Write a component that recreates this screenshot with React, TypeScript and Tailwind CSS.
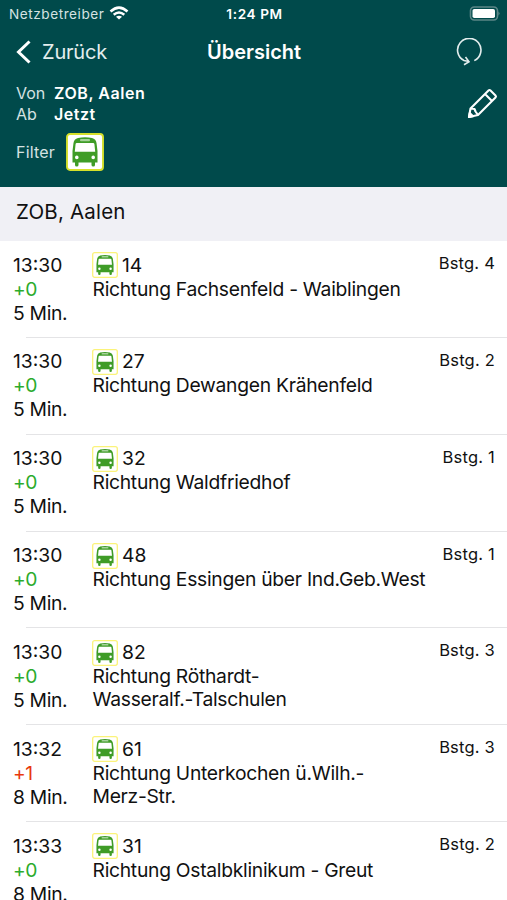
import React from "react";

type Departure = {
  time: string;
  delay: number;
  minutes: number;
  line: string;
  direction: string[];
  platform: number;
}

const departures: Departure[] = [
  { time: "13:30", delay: 0, minutes: 5, line: "14", direction: ["Richtung Fachsenfeld - Waiblingen"], platform: 4 },
  { time: "13:30", delay: 0, minutes: 5, line: "27", direction: ["Richtung Dewangen Krähenfeld"], platform: 2 },
  { time: "13:30", delay: 0, minutes: 5, line: "32", direction: ["Richtung Waldfriedhof"], platform: 1 },
  { time: "13:30", delay: 0, minutes: 5, line: "48", direction: ["Richtung Essingen über Ind.Geb.West"], platform: 1 },
  { time: "13:30", delay: 0, minutes: 5, line: "82", direction: ["Richtung Röthardt-", "Wasseralf.-Talschulen"], platform: 3 },
  { time: "13:32", delay: 1, minutes: 8, line: "61", direction: ["Richtung Unterkochen ü.Wilh.-", "Merz-Str."], platform: 3 },
  { time: "13:33", delay: 0, minutes: 8, line: "31", direction: ["Richtung Ostalbklinikum - Greut"], platform: 2 },
];

// bus pictogram with its yellow frame
const BusIcon = ({ className, frame }: { className: string; frame: string }) => (
  <svg viewBox="0 0 38 38" className={className}>
    <rect x="1" y="1" width="36" height="36" rx="3" fill="#fff" stroke={frame} strokeWidth="1.900" />
    <path
      fill="#3f9c27"
      fillRule="evenodd"
      d="M12 5Q19 3.500 26 5Q30 6 30.500 10L31.500 18V29.500H29V32Q29 33.500 27.300 33.500Q25.500 33.500 25.500 32V29.500H12.500V32Q12.500 33.500 10.700 33.500Q9 33.500 9 32V29.500H6.500V18L7.500 10Q8 6 12 5ZM10.800 10Q9.800 10 9.600 11L8.800 18.800H29.200L28.400 11Q28.200 10 27.200 10ZM10.800 22.600A1.800 1.800 0 1 0 10.800 26.200A1.800 1.800 0 1 0 10.800 22.600ZM27.200 22.600A1.800 1.800 0 1 0 27.200 26.200A1.800 1.800 0 1 0 27.200 22.600Z"
    />
    <rect x="14" y="6" width="10" height="2.200" rx="1" fill="#a5d199" />
  </svg>
);

const StatusBar = () => (
  <div className="flex h-7 items-center justify-between pl-[9px] pr-[7px]">
    <div className="flex flex-1 items-center gap-[5px]">
      <span className="text-[13.600px] tracking-[0.550px] text-[#d5e2e2]">Netzbetreiber</span>
      <svg viewBox="0 0 20 14" className="-mt-0.5 h-[14px] w-[20px]" fill="none" stroke="#fff" strokeWidth="2.500">
        <path d="M1.500 5.500Q10 -2.300 18.500 5.500" />
        <path d="M4.700 8.700Q10 4.200 15.300 8.700" />
        <path d="M7 10.700Q10 8.700 13 10.700L10 13.600Z" fill="#fff" stroke="none" />
      </svg>
    </div>
    <span className="text-[13.600px] font-semibold tracking-[0.600px]">1:24 PM</span>
    <div className="flex flex-1 items-center justify-end">
      <svg viewBox="0 0 31 15" className="-mt-px h-[15px] w-[31px]">
        <rect x="1.500" y="1" width="27" height="13" rx="3.800" fill="none" stroke="#5b8687" strokeWidth="1.600" />
        <rect x="3.500" y="3" width="22.500" height="9" rx="1.800" fill="#fff" />
        <path d="M29.500 5.500Q31.500 7.500 29.500 9.500Z" fill="#6b9191" />
      </svg>
    </div>
  </div>
);

const Header = () => (
  <header className="h-[186.500px] bg-[#004a4b] text-white">
    <StatusBar />
    <div className="flex h-12 items-center pl-4 pr-[25px]">
      <button className="flex w-[191px] items-center gap-[11px]">
        <svg viewBox="0 0 15 24" className="h-6 w-[15px]" fill="none" stroke="#fff" strokeWidth="3">
          <path d="M13.500 1.500L2.500 12L13.500 22.500" />
        </svg>
        <span className="text-[20px] tracking-[-0.200px] text-[#e4eeee]">Zurück</span>
      </button>
      <h1 className="text-[20px] font-semibold">Übersicht</h1>
      <div className="flex flex-1 justify-end">
        <svg viewBox="0 0 26 28" className="h-7 w-[26px]" fill="none" stroke="#e2eded" strokeWidth="1.600">
          <path d="M18.300 22.600A11.700 11.700 0 1 0 8 22.500L12.800 23.500M9.500 19L13 23.700L8 26.700" />
        </svg>
      </div>
    </div>
    <div className="flex items-center justify-between pl-4 pr-[9px] pt-[7px]">
      <div className="text-[16px] leading-[21px]">
        <div className="flex">
          <span className="w-[38px] text-[#d5e2e2]">Von</span>
          <span className="font-semibold tracking-[0.550px]">ZOB, Aalen</span>
        </div>
        <div className="flex">
          <span className="w-[38px] text-[#d5e2e2]">Ab</span>
          <span className="font-semibold tracking-[0.500px]">Jetzt</span>
        </div>
      </div>
      <svg viewBox="0 0 31 31" className="-mt-0.5 h-[31px] w-[31px]" fill="none" stroke="#fff" strokeWidth="2.100" strokeLinejoin="round">
        <path d="M2 29L3.500 20.500L21.500 2.500Q22.500 1.500 23.500 2.500L28.500 7.500Q29.500 8.500 28.500 9.500L11 27ZM3.500 20.500L7.500 21L8.500 23.500L11 27M18 6L25 13" />
        <path d="M2 29L2.700 25L6 28.200Z" fill="#fff" />
      </svg>
    </div>
    <div className="flex items-center pl-4 pt-[8px]">
      <span className="w-[50px] text-[16px] tracking-[0.200px] text-[#d5e2e2]">Filter</span>
      <BusIcon className="h-[38px] w-[38px]" frame="#d5e02a" />
    </div>
  </header>
);

const DepartureRow = ({ departure }: { departure: Departure }) => (
  <li className="flex h-[96.850px] flex-col">
    <div className="flex flex-1 pl-[13px] pr-3 pt-3">
      <div className="-mt-[0.500px] w-[79.500px] text-[19.300px] leading-6">
        <div>{departure.time}</div>
        <div className={departure.delay > 0 ? "tracking-[-0.500px] text-[#e8380d]" : "tracking-[-0.500px] text-[#2cab2c]"}>
          +{departure.delay}
        </div>
        <div className="tracking-[-0.300px]">{departure.minutes} Min.</div>
      </div>
      <div className="flex-1 text-[19.300px] leading-[23.500px]">
        <div className="flex h-[24.500px] items-center gap-1">
          <BusIcon className="-ml-[0.500px] h-[26px] w-[26px]" frame="#fbf37a" />
          <span>{departure.line}</span>
        </div>
        {departure.direction.map((text) => (
          <div key={text} className="whitespace-nowrap tracking-[-0.280px]">{text}</div>
        ))}
      </div>
      <div className="text-[16.500px] leading-[21px] tracking-[0.200px]">Bstg. {departure.platform}</div>
    </div>
    <div className="ml-[26px] h-px bg-[#e4e4e6]" />
  </li>
);

export const App = () => {
  return (
    <div className="h-[900px] w-[507px] overflow-hidden bg-white font-['Inter',sans-serif] text-[#111]">
      <Header />
      <h2 className="flex h-[54.500px] items-center bg-[#f0f0f5] pb-[3px] pl-4 text-[20.500px] tracking-[0.200px]">ZOB, Aalen</h2>
      <ul>
        {departures.map((departure) => (
          <DepartureRow key={departure.line} departure={departure} />
        ))}
      </ul>
    </div>
  );
}

export default App;
